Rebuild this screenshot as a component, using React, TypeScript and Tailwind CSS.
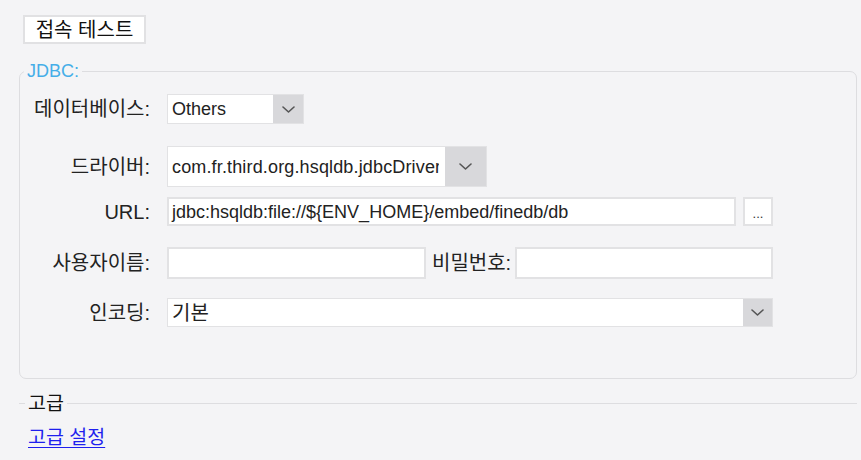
import React from "react";

const Chevron = ({ w = 13, h = 7 }: { w?: number; h?: number }) => (
  <svg width={w} height={h} viewBox={`0 0 ${w} ${h}`} fill="none">
    <polyline
      points={`1,1 ${w / 2},${h - 1} ${w - 1},1`}
      stroke="#555"
      strokeWidth="1.6"
      strokeLinecap="round"
      strokeLinejoin="round"
    />
  </svg>
);

const Label = ({ children }: { children: React.ReactNode }) => (
  <div className="w-[130px] shrink-0 text-right text-[20px] leading-[20px]">{children}</div>
);

const Combo = ({
  value,
  width,
  height,
  arrow,
  text = "",
}: {
  value: string;
  width: string;
  height: string;
  arrow: string;
  text?: string;
}) => (
  <div className={`flex ${width} ${height} border border-[#e2e2e4] bg-white`}>
    <div
      className={`flex min-w-0 flex-1 items-center overflow-hidden whitespace-nowrap pl-[4px] pr-[6px] leading-[20px] ${text}`}
    >
      <span className="overflow-hidden">{value}</span>
    </div>
    <div className={`flex ${arrow} shrink-0 items-center justify-center bg-[#d8d8db]`}>
      <Chevron />
    </div>
  </div>
);

export default function App() {
  return (
    <div className="min-h-screen w-full bg-[#f4f4f6] pt-[15px] font-['Liberation_Sans','Noto_Sans_CJK_KR',sans-serif] text-[18px] text-[#222]">
      <button className="ml-[23px] block h-[29px] w-[123px] border-2 border-[#e1e1e3] bg-white text-[20px] leading-none text-[#111]">
        접속 테스트
      </button>

      <fieldset className="ml-[19px] mr-[4px] mt-[17px] rounded-[7px] border border-[#dddde0] pb-[51px] pt-[13px]">
        <legend className="ml-[4px] px-[3px] leading-[20px] text-[#45aee8]">JDBC:</legend>

        <div className="flex items-center gap-[17px]">
          <Label>데이터베이스:</Label>
          <Combo value="Others" width="w-[137px]" height="h-[30px]" arrow="w-[30px]" />
        </div>

        <div className="mt-[22px] flex items-center gap-[17px]">
          <Label>드라이버:</Label>
          <Combo
            value="com.fr.third.org.hsqldb.jdbcDriver"
            width="w-[320px]"
            height="h-[41px]"
            arrow="w-[41px]"
            text="tracking-[0.15px]"
          />
        </div>

        <div className="mt-[10px] flex items-center gap-[17px]">
          <Label>URL:</Label>
          <div className="flex items-center gap-[7px]">
            <div className="flex h-[29px] w-[569px] items-center border-2 border-[#e2e2e4] bg-white pl-[3px] leading-[20px]">
              jdbc:hsqldb:file://${"{"}ENV_HOME{"}"}/embed/finedb/db
            </div>
            <button className="flex h-[29px] w-[30px] items-end justify-center border-2 border-[#e2e2e4] bg-white pb-[4px] text-[13px] leading-none text-[#333]">
              ...
            </button>
          </div>
        </div>

        <div className="mt-[21px] flex items-center gap-[17px]">
          <Label>사용자이름:</Label>
          <div className="flex items-center">
            <div className="h-[32px] w-[259px] border-2 border-[#e2e2e4] bg-white" />
            <div className="ml-[6px] w-[83px] text-[20px] leading-[20px]">비밀번호:</div>
            <div className="h-[32px] w-[258px] border-2 border-[#e2e2e4] bg-white" />
          </div>
        </div>

        <div className="mt-[19px] flex items-center gap-[17px]">
          <Label>인코딩:</Label>
          <Combo value="기본" width="w-[606px]" height="h-[29px]" arrow="w-[29px]" text="text-[20px]" />
        </div>
      </fieldset>

      <fieldset className="ml-[19px] mr-[4px] mt-[14px] border-t border-[#dddde0] px-[6px]">
        <legend className="px-[3px] text-[19.5px] leading-[20px] text-[#111]">고급</legend>
        <a
          href="#"
          className="ml-[3px] mt-[14px] inline-block text-[19.5px] leading-[20px] text-[#1f1fee] underline underline-offset-[3px]"
        >
          고급 설정
        </a>
      </fieldset>
    </div>
  );
}
